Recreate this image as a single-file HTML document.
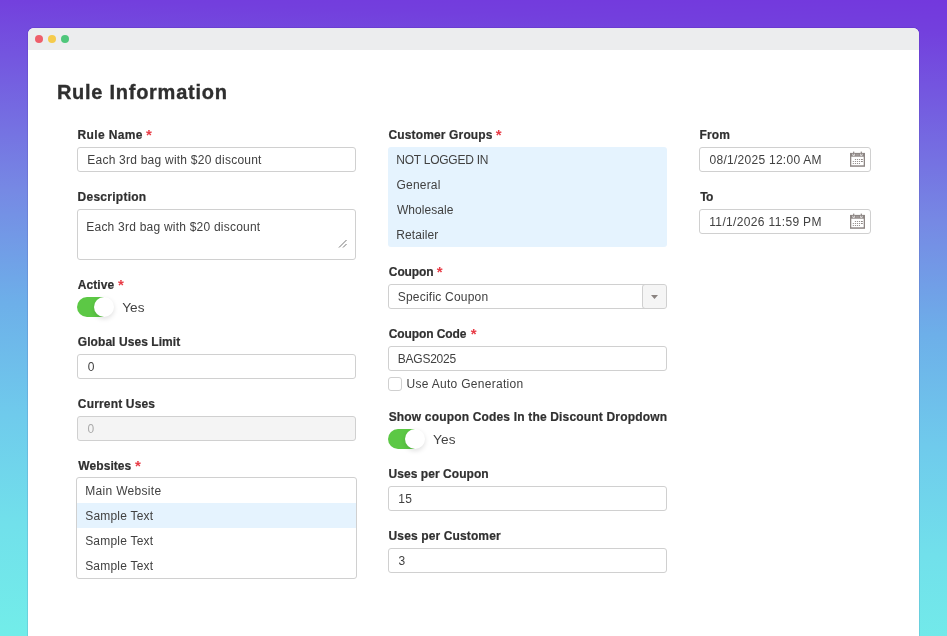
<!DOCTYPE html>
<html lang="en">
<head>
<meta charset="utf-8">
<title>Rule Information</title>
<style>
*{box-sizing:border-box;margin:0;padding:0}
html,body{width:947px;height:636px;overflow:hidden}
body{font-family:"Liberation Sans",sans-serif;font-size:12px;color:#414141;
background:linear-gradient(182deg,#7338dd 0%,#733fdd 4.5%,#7689e4 33.3%,#6dafe9 50%,#6fcaec 66.6%,#71e0eb 83%,#72ede9 100%);position:relative}
#root{position:absolute;left:0;top:0;width:947px;height:636px;overflow:hidden;will-change:transform}
.win{position:absolute;left:28px;top:28px;width:891px;height:640px;background:#fff;border-radius:6px 6px 0 0;overflow:hidden;box-shadow:0 0 0 1px rgba(30,0,110,.10)}
.bar{position:absolute;left:0;top:0;width:100%;height:22px;background:#ecedee}
.dot{position:absolute;top:7px;width:8px;height:8px;border-radius:50%}
.abs{position:absolute;white-space:nowrap}
h1{position:absolute;left:56px;top:78.7px;font-size:20px;line-height:26px;font-weight:bold;color:#2f2f2f;-webkit-text-stroke:0.35px #2f2f2f;white-space:nowrap}
.lbl{position:absolute;font-weight:bold;font-size:12px;line-height:18px;color:#303030;-webkit-text-stroke:0.2px #303030;white-space:nowrap}
.req{-webkit-text-stroke:0;color:#e83b46;font-weight:bold;font-size:15px;line-height:10px;position:relative;top:0.7px;left:-0.3px}
.inp{position:absolute;height:25px;border:1px solid #d0d0d0;border-radius:3px;background:#fff;font-size:12px;line-height:23px;padding-left:10px;color:#414141;white-space:nowrap;overflow:hidden}
.inp.dis{background:#f4f4f4;color:#aaa}
.list{position:absolute;border:1px solid #d0d0d0;border-radius:3px;background:#fff;overflow:hidden}
.list div{height:25px;line-height:25px;padding-left:9px;white-space:nowrap;color:#414141}
.list .sel{background:#e5f3fe}
.inp>span,.list span{position:relative;top:1px}
.cal{right:5px;top:3px}
.tog{position:absolute;width:37px;height:20px;border-radius:10px;background:linear-gradient(90deg,#5cc845 0,#5cc845 27px,#fff 27px)}
.tog i{position:absolute;right:-0.2px;top:-0.2px;width:20.4px;height:20.4px;border-radius:50%;background:#fff;box-shadow:0 2px 5px rgba(0,0,0,.13)}
.yes{position:absolute;font-size:13.6px;line-height:21px;color:#414141;white-space:nowrap}
/*LS*/
#t0{letter-spacing:0.736px;margin-left:0.93px}
#l1{letter-spacing:0.364px;margin-left:0.55px}
#v1{letter-spacing:0.232px;margin-left:-0.74px}
#l2{letter-spacing:0.262px;margin-left:0.55px}
#v2{letter-spacing:0.223px;margin-left:-0.74px}
#l3{letter-spacing:0.050px;margin-left:0.86px}
#y1{letter-spacing:0.040px;margin-left:0.25px}
#l4{letter-spacing:0.065px;margin-left:0.81px}
#v4{letter-spacing:0.000px;margin-left:-0.18px}
#l5{letter-spacing:0.167px;margin-left:0.81px}
#v5{letter-spacing:0.000px;margin-left:-0.40px}
#l6{letter-spacing:0.078px;margin-left:1.29px}
#w1{letter-spacing:0.309px;margin-left:-0.74px}
#w2{letter-spacing:0.215px;margin-left:-0.85px}
#w3{letter-spacing:0.214px;margin-left:-0.85px}
#w4{letter-spacing:0.214px;margin-left:-0.85px}
#l7{letter-spacing:0.145px;margin-left:0.46px}
#g1{letter-spacing:-0.238px;margin-left:0.26px}
#g2{letter-spacing:0.179px;margin-left:0.57px}
#g3{letter-spacing:0.060px;margin-left:0.94px}
#g4{letter-spacing:0.097px;margin-left:0.26px}
#l8{letter-spacing:-0.086px;margin-left:0.81px}
#v8{letter-spacing:0.216px;margin-left:-1.27px}
#l9{letter-spacing:-0.095px;margin-left:0.81px}
#v9{letter-spacing:-0.220px;margin-left:-1.30px}
#c1{letter-spacing:0.295px;margin-left:0.46px}
#l10{letter-spacing:0.171px;margin-left:0.65px}
#y2{letter-spacing:0.140px;margin-left:0.07px}
#l11{letter-spacing:0.049px;margin-left:0.57px}
#v11{letter-spacing:0.460px;margin-left:-0.79px}
#l12{letter-spacing:0.127px;margin-left:0.57px}
#v12{letter-spacing:0.000px;margin-left:-0.56px}
#l13{letter-spacing:0.156px;margin-left:0.55px}
#v13{letter-spacing:0.274px;margin-left:-0.51px}
#l14{letter-spacing:-0.690px;margin-left:1.26px}
#v14{letter-spacing:0.350px;margin-left:-0.79px}
/*END*/
</style>
</head>
<body>
<div id="root">
<div class="win"><div class="bar"></div>
<span class="dot" style="left:7px;background:#ee5f6b"></span>
<span class="dot" style="left:20px;background:#f5cb4c"></span>
<span class="dot" style="left:33px;background:#4fc77b"></span>
</div>

<h1 id="t0">Rule Information</h1>

<!-- column 1 -->
<div class="lbl" style="left:77px;top:126px"><span id="l1">Rule Name</span> <span class="req">*</span></div>
<div class="inp" style="left:77px;top:147px;width:279px"><span id="v1">Each 3rd bag with $20 discount</span></div>

<div class="lbl" style="left:77px;top:188px"><span id="l2">Description</span></div>
<div class="inp" style="left:77px;top:209px;width:279px;height:51px;padding-left:9px;line-height:18px;padding-top:7px"><span id="v2">Each 3rd bag with $20 discount</span>
<svg class="abs" style="right:8px;bottom:11px" width="9" height="9" viewBox="0 0 9 9"><path d="M1 8.5L8.5 1M5 8.5L8.5 5" stroke="#666" stroke-width="0.9" fill="none"/></svg></div>

<div class="lbl" style="left:77px;top:276px"><span id="l3">Active</span> <span class="req" style="margin-left:0.8px">*</span></div>
<div class="tog" style="left:77px;top:297px"><i></i></div>
<div class="yes" style="left:122px;top:297px"><span id="y1">Yes</span></div>

<div class="lbl" style="left:77px;top:333px"><span id="l4">Global Uses Limit</span></div>
<div class="inp" style="left:77px;top:354px;width:279px"><span id="v4">0</span></div>

<div class="lbl" style="left:77px;top:395px"><span id="l5">Current Uses</span></div>
<div class="inp dis" style="left:77px;top:416px;width:279px"><span id="v5">0</span></div>

<div class="lbl" style="left:77px;top:457px"><span id="l6">Websites</span> <span class="req" style="margin-left:0.5px">*</span></div>
<div class="list" style="left:76px;top:477px;width:281px;height:102px">
<div><span id="w1">Main Website</span></div>
<div class="sel"><span id="w2">Sample Text</span></div>
<div><span id="w3">Sample Text</span></div>
<div><span id="w4">Sample Text</span></div>
</div>

<!-- column 2 -->
<div class="lbl" style="left:388px;top:126px"><span id="l7">Customer Groups</span> <span class="req">*</span></div>
<div class="list" style="left:388px;top:147px;width:279px;height:100px;border:0;background:#e5f3fe">
<div style="padding-left:8px"><span id="g1">NOT LOGGED IN</span></div>
<div style="padding-left:8px"><span id="g2">General</span></div>
<div style="padding-left:8px"><span id="g3">Wholesale</span></div>
<div style="padding-left:8px"><span id="g4">Retailer</span></div>
</div>

<div class="lbl" style="left:388px;top:263px"><span id="l8">Coupon</span> <span class="req">*</span></div>
<div class="inp" style="left:388px;top:284px;width:279px"><span id="v8">Specific Coupon</span>
<div class="abs" style="right:-1px;top:-1px;width:25px;height:25px;border:1px solid #d0d0d0;border-radius:3px;background:#f5f5f5">
<svg class="abs" style="left:8px;top:10px" width="7" height="4" viewBox="0 0 7 4"><path d="M0 0H7L3.5 4Z" fill="#8a8380"/></svg></div></div>

<div class="lbl" style="left:388px;top:325px"><span id="l9">Coupon Code</span> <span class="req" style="margin-left:1.2px">*</span></div>
<div class="inp" style="left:388px;top:346px;width:279px"><span id="v9">BAGS2025</span></div>
<div class="abs" style="left:388px;top:377px;width:14px;height:14px;border:1px solid #d0d0d0;border-radius:3px;background:#fff"></div>
<div class="abs" style="left:406px;top:375px;line-height:18px"><span id="c1">Use Auto Generation</span></div>

<div class="lbl" style="left:388px;top:408px"><span id="l10">Show coupon Codes In the Discount Dropdown</span></div>
<div class="tog" style="left:388px;top:429px"><i></i></div>
<div class="yes" style="left:433px;top:429px"><span id="y2">Yes</span></div>

<div class="lbl" style="left:388px;top:465px"><span id="l11">Uses per Coupon</span></div>
<div class="inp" style="left:388px;top:486px;width:279px"><span id="v11">15</span></div>

<div class="lbl" style="left:388px;top:527px"><span id="l12">Uses per Customer</span></div>
<div class="inp" style="left:388px;top:548px;width:279px"><span id="v12">3</span></div>

<!-- column 3 -->
<div class="lbl" style="left:699px;top:126px"><span id="l13">From</span></div>
<div class="inp" style="left:699px;top:147px;width:172px"><span id="v13">08/1/2025 12:00 AM</span><svg class="abs cal" width="15" height="16" viewBox="0 0 15 16"><rect x="0" y="1.9" width="15" height="13.9" fill="#8d8684"/><rect x="1.3" y="5.7" width="12.4" height="8.6" fill="#fff"/><rect x="2.4" y="2.6" width="2.6" height="2.2" rx="1" fill="#f3f2f2"/><rect x="10" y="2.6" width="2.6" height="2.2" rx="1" fill="#f3f2f2"/><rect x="5.6" y="2.9" width="3.8" height="1.9" fill="#a09a98"/><rect x="3.1" y="0.6" width="1.2" height="3.2" fill="#8d8684"/><rect x="10.7" y="0.6" width="1.2" height="3.2" fill="#8d8684"/><g fill="#8d8684"><path d="M4.9 7.9h1v1h-1zM6.9 7.9h1v1h-1zM8.9 7.9h1v1h-1zM10.9 7.9h1.9v1h-1.9zM2.8 9.9h1v1h-1zM4.9 9.9h1v1h-1zM6.9 9.9h1v1h-1zM8.9 9.9h1v1h-1zM10.9 9.9h1.9v1h-1.9zM2.8 12h1v1h-1zM4.9 12h1v1h-1zM6.9 12h1v1h-1zM8.9 12h1v1h-1z"/></g></svg></div>

<div class="lbl" style="left:699px;top:188px"><span id="l14">To</span></div>
<div class="inp" style="left:699px;top:209px;width:172px"><span id="v14">11/1/2026 11:59 PM</span><svg class="abs cal" width="15" height="16" viewBox="0 0 15 16"><rect x="0" y="1.9" width="15" height="13.9" fill="#8d8684"/><rect x="1.3" y="5.7" width="12.4" height="8.6" fill="#fff"/><rect x="2.4" y="2.6" width="2.6" height="2.2" rx="1" fill="#f3f2f2"/><rect x="10" y="2.6" width="2.6" height="2.2" rx="1" fill="#f3f2f2"/><rect x="5.6" y="2.9" width="3.8" height="1.9" fill="#a09a98"/><rect x="3.1" y="0.6" width="1.2" height="3.2" fill="#8d8684"/><rect x="10.7" y="0.6" width="1.2" height="3.2" fill="#8d8684"/><g fill="#8d8684"><path d="M4.9 7.9h1v1h-1zM6.9 7.9h1v1h-1zM8.9 7.9h1v1h-1zM10.9 7.9h1.9v1h-1.9zM2.8 9.9h1v1h-1zM4.9 9.9h1v1h-1zM6.9 9.9h1v1h-1zM8.9 9.9h1v1h-1zM10.9 9.9h1.9v1h-1.9zM2.8 12h1v1h-1zM4.9 12h1v1h-1zM6.9 12h1v1h-1zM8.9 12h1v1h-1z"/></g></svg></div>

</div>
</body>
</html>
